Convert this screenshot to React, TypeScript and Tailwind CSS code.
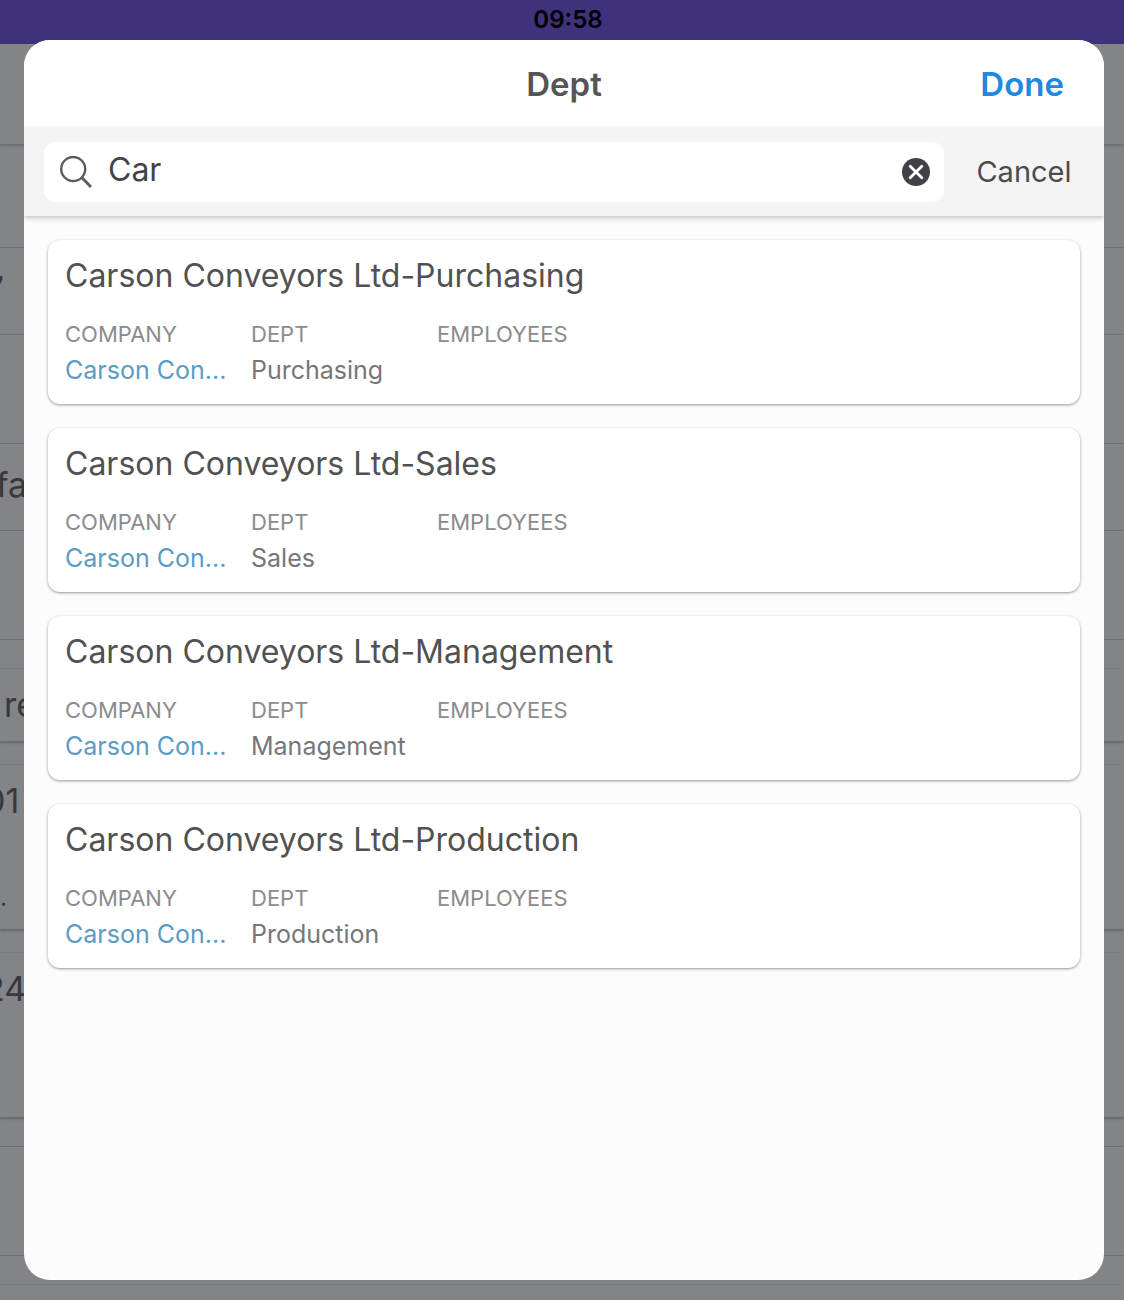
import { useState } from "react";

interface Department {
  company: string;
  dept: string;
  employees: string;
}

const departments: Department[] = [
  { company: "Carson Con...", dept: "Purchasing", employees: "" },
  { company: "Carson Con...", dept: "Sales", employees: "" },
  { company: "Carson Con...", dept: "Management", employees: "" },
  { company: "Carson Con...", dept: "Production", employees: "" },
];

function SearchIcon() {
  return (
    <svg className="w-8 h-8 shrink-0" viewBox="0 0 32 32" fill="none" stroke="#5a5c62" strokeWidth="2.4" aria-hidden="true">
      <circle cx="13.2" cy="13" r="12" />
      <path d="M21.8 21.6L31 31" strokeWidth="2.9" />
    </svg>
  );
}

function ClearIcon() {
  return (
    <svg className="block w-7 h-7" viewBox="0 0 28 28" aria-hidden="true">
      <circle cx="14" cy="14" r="14" fill="#3f4248" />
      <path d="M8.2 8.2L19.8 19.8M19.8 8.2L8.2 19.8" stroke="#fff" strokeWidth="2.8" strokeLinecap="round" />
    </svg>
  );
}

/* The record page that stays dimmed behind the sheet */
function DimmedPage() {
  const row = "border-b border-[#6d6e73] flex items-center overflow-hidden whitespace-nowrap pb-1";
  const card = "border-t border-[#7b7c81] shadow-[0_2px_2px_#66676c]";

  return (
    <div className="min-h-screen bg-[#838488] text-[#37383c] text-[34px] leading-10 overflow-hidden">
      <header className="h-11 bg-[#3f317c] text-black text-2xl font-semibold text-center pl-3 pt-1 leading-8">
        09:58
      </header>
      <div className="h-[100px] shadow-[0_2px_2px_#6d6e73]" />
      <div className={`${row} h-[104px]`} />
      <div className={`${row} h-[87px] font-semibold`}>
        <span className="-ml-4">7</span>
      </div>
      <div className={`${row} h-[109px]`} />
      <div className={`${row} h-[87px]`}>
        <span className="-ml-1">fa</span>
      </div>
      <div className={`${row} h-[109px]`} />
      <div className={`${card} mt-7 h-[73px] flex items-center pl-1`}>re</div>
      <div className={`${card} mt-[23px] h-[165px] pt-4`}>
        <p className="-ml-4">01</p>
        <p className="mt-14 text-[25px]">.</p>
      </div>
      <div className={`${card} mt-[23px] h-[165px] pt-4`}>
        <p className="-ml-4">24</p>
      </div>
      <div className="mt-[29px] h-[110px] border-y border-[#6d6e73]" />
      <div className="mt-7 border-t border-[#7b7c81]" />
    </div>
  );
}

function DepartmentCard({ company, dept, employees }: Department) {
  return (
    <article className="rounded-xl bg-white px-[17px] pt-4 pb-3.5 shadow-[0_1px_3px_rgba(0,0,0,0.4)]">
      <h2 className="text-[32px] leading-10 text-[#515151]">Carson Conveyors Ltd-{dept}</h2>
      <dl className="mt-[22px] grid grid-cols-[repeat(3,162px)] gap-6">
        <div>
          <dt className="text-[22px] leading-8 text-[#8b8b8b]">COMPANY</dt>
          <dd className="text-[25px] leading-10 whitespace-nowrap">
            <a href="#company" className="text-[#5b9bc4]">{company}</a>
          </dd>
        </div>
        <div>
          <dt className="text-[22px] leading-8 text-[#8b8b8b]">DEPT</dt>
          <dd className="text-[25px] leading-10 text-[#777777]">{dept}</dd>
        </div>
        <div>
          <dt className="text-[22px] leading-8 text-[#8b8b8b]">EMPLOYEES</dt>
          <dd className="text-[25px] leading-10 text-[#777777]">{employees}</dd>
        </div>
      </dl>
    </article>
  );
}

export default function App() {
  const [query, setQuery] = useState("Car");

  return (
    <div className="relative font-[Inter,sans-serif]">
      <DimmedPage />

      <section role="dialog" aria-labelledby="sheet-title" className="absolute left-6 right-5 top-10 bottom-5 flex flex-col overflow-hidden rounded-[26px] bg-[#fcfcfc]">
        <header className="grid h-22 shrink-0 grid-cols-[1fr_auto_1fr] items-center bg-white px-10">
          <h1 id="sheet-title" className="col-start-2 text-[33px] leading-10 font-semibold text-[#555555]">Dept</h1>
          <button type="button" className="justify-self-end text-[33px] leading-10 font-semibold text-[#1f88e0]">Done</button>
        </header>

        <form className="flex h-22 shrink-0 items-center bg-[#f4f4f4] pl-5 shadow-[0_2px_5px_rgba(0,0,0,0.22)]" onSubmit={(e) => e.preventDefault()}>
          <label className="flex h-15 min-w-0 grow items-center rounded-xl bg-white pl-4 pr-3.5">
            <SearchIcon />
            <input
              type="text"
              aria-label="Search departments"
              value={query}
              onChange={(e) => setQuery(e.target.value)}
              className="ml-4 min-w-0 grow bg-transparent pb-1 text-[32px] leading-10 text-[#414349] outline-none"
            />
            <button type="button" aria-label="Clear search" onClick={() => setQuery("")}>
              <ClearIcon />
            </button>
          </label>
          <button type="button" className="w-40 shrink-0 text-center text-[29px] leading-10 text-[#494b50]">Cancel</button>
        </form>

        <main className="flex grow flex-col gap-6 p-6">
          {departments.map((d) => (
            <DepartmentCard key={d.dept} {...d} />
          ))}
        </main>
      </section>
    </div>
  );
}
